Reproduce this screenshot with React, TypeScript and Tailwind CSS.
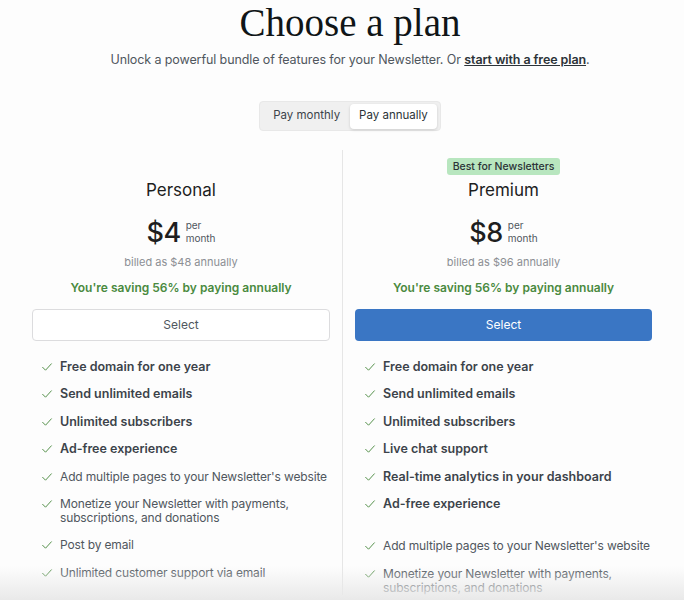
import React from 'react';

type Feature = { text: string; bold?: boolean; gapBefore?: boolean };

const personalFeatures: Feature[] = [
  { text: 'Free domain for one year', bold: true },
  { text: 'Send unlimited emails', bold: true },
  { text: 'Unlimited subscribers', bold: true },
  { text: 'Ad-free experience', bold: true },
  { text: "Add multiple pages to your Newsletter's website" },
  { text: 'Monetize your Newsletter with payments, subscriptions, and donations' },
  { text: 'Post by email' },
  { text: 'Unlimited customer support via email' },
];

const premiumFeatures: Feature[] = [
  { text: 'Free domain for one year', bold: true },
  { text: 'Send unlimited emails', bold: true },
  { text: 'Unlimited subscribers', bold: true },
  { text: 'Live chat support', bold: true },
  { text: 'Real-time analytics in your dashboard', bold: true },
  { text: 'Ad-free experience', bold: true },
  { text: "Add multiple pages to your Newsletter's website", gapBefore: true },
  { text: 'Monetize your Newsletter with payments, subscriptions, and donations' },
];

const Check = () => (
  <svg viewBox="0 0 24 24" className="w-[14px] h-[14px] shrink-0" fill="none">
    <path d="M4.5 12.5l5 5 10-11" stroke="#4a8a3f" strokeWidth="1.6" strokeLinecap="round" strokeLinejoin="round" />
  </svg>
);

interface PlanProps {
  name: string;
  price: string;
  billed: string;
  badge?: string;
  primary?: boolean;
  features: Feature[];
}

const Plan: React.FC<PlanProps> = ({ name, price, billed, badge, primary, features }) => (
  <div className="flex flex-col items-stretch pt-2">
    <div className="h-[17px] flex justify-center">
      {badge && (
        <span className="bg-[#b8e6bf] text-[#2c3338] text-[10.5px] font-medium leading-[17px] px-[6px] rounded-[3px]">
          {badge}
        </span>
      )}
    </div>
    <h2 className="text-center text-[17px] leading-[24px] mt-[3px] text-[#1e1e1e]">{name}</h2>
    <div className="flex justify-center items-center mt-[13px] h-[34px]">
      <span className="text-[27px] leading-none text-[#1e1e1e] font-medium tracking-[-0.5px]">{price}</span>
      <span className="ml-[5px] text-[10px] leading-[13px] text-[#50575e]">
        per
        <br />
        month
      </span>
    </div>
    <p className="text-center text-[11px] leading-[14px] text-[#8c8f94] mt-[6px]">{billed}</p>
    <p className="text-center text-[12px] leading-[16px] font-semibold text-[#4a8a3f] mt-[11px]">
      You're saving 56% by paying annually
    </p>
    <button
      className={
        primary
          ? 'mt-[13px] h-[32px] rounded-[4px] bg-[#3a76c4] text-white text-[12px]'
          : 'mt-[13px] h-[32px] rounded-[4px] bg-white border border-[#dcdcde] text-[#50575e] text-[12px]'
      }
    >
      Select
    </button>
    <ul className="mt-[19px] flex flex-col gap-[13.4px] pl-2">
      {features.map((f) => (
        <li
          key={f.text}
          className={
            'flex items-start gap-[6px] leading-[14px] ' +
            (f.gapBefore ? 'mt-[15px] ' : '') +
            (f.bold ? 'text-[12.5px] font-semibold text-[#3c434a]' : 'text-[12px] tracking-[-0.15px] text-[#50575e]')
          }
        >
          <Check />
          <span className="max-w-[268px]">{f.text}</span>
        </li>
      ))}
    </ul>
  </div>
);

export default function App() {
  return (
    <div className="relative min-h-[600px] h-[600px] overflow-hidden bg-[#fdfdfd] font-['Inter',sans-serif]">
      <header className="pl-[16px]">
        <h1 className="text-center font-['Liberation_Serif',serif] text-[39px] leading-[46px] text-[#101517]">
          Choose a plan
        </h1>
        <p className="text-center text-[12.5px] tracking-[-0.1px] leading-[18px] text-[#50575e] mt-[5px]">
          Unlock a powerful bundle of features for your Newsletter. Or{' '}
          <a className="underline font-semibold text-[#2c3338]">start with a free plan</a>.
        </p>
        <div className="flex justify-center mt-[32px]">
          <div className="flex items-center bg-[#f0f0f0] rounded-[4px] p-[3px] h-[30px] border border-[#e8e8e8]">
            <button className="px-[10px] h-[24px] text-[11.5px] text-[#3c434a]">Pay monthly</button>
            <button className="px-[9px] h-[25px] text-[11.5px] text-[#2c3338] bg-white rounded-[4px] shadow-[0_1px_3px_rgba(0,0,0,0.15)]">
              Pay annually
            </button>
          </div>
        </div>
      </header>
      <div className="grid grid-cols-2 mx-[32px] mt-[19px]">
        <div className="pr-3">
          <Plan name="Personal" price="$4" billed="billed as $48 annually" features={personalFeatures} />
        </div>
        <div className="pl-3 border-l border-[#e6e6e6]">
          <Plan
            name="Premium"
            price="$8"
            billed="billed as $96 annually"
            badge="Best for Newsletters"
            primary
            features={premiumFeatures}
          />
        </div>
      </div>
      <div className="absolute left-0 right-0 bottom-0 h-[34px] bg-gradient-to-b from-transparent to-[#e9e9e9] pointer-events-none" />
    </div>
  );
}
